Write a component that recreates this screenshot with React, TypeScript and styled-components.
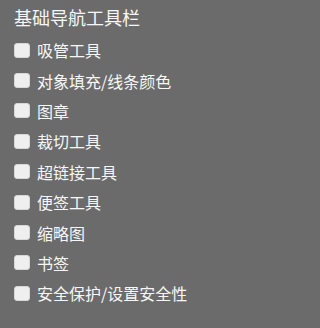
import { useState } from 'react';
import styled, { createGlobalStyle } from 'styled-components';

const GlobalStyle = createGlobalStyle`
  html, body {
    margin: 0;
    padding: 0;
    background: #6b6b6b;
  }
  body {
    font-family: "Noto Sans CJK SC", "Liberation Sans", sans-serif;
  }
`;

const tools = [
  '吸管工具',
  '对象填充/线条颜色',
  '图章',
  '裁切工具',
  '超链接工具',
  '便签工具',
  '缩略图',
  '书签',
  '安全保护/设置安全性',
];

export default function App() {
  const [checked, setChecked] = useState<Record<string, boolean>>({});
  const toggle = (name: string) => () => {
    setChecked(prev => ({ ...prev, [name]: !prev[name] }));
  };
  return (
    <Panel>
      <GlobalStyle />
      <Title>基础导航工具栏</Title>
      <List>
        {tools.map(name => (
          <Row key={name}>
            <Box type="checkbox" checked={!!checked[name]} onChange={toggle(name)} />
            <Label>{name}</Label>
          </Row>
        ))}
      </List>
    </Panel>
  );
}

const Panel = styled.section`
  box-sizing: border-box;
  width: 240px;
  height: 328px;
  padding: 4px 0 0 14px;
  background: #6b6b6b;
  color: #f7f7f7;
`;

const Title = styled.h2`
  margin: 0;
  font-size: 18px;
  font-weight: 400;
  line-height: 26px;
`;

const List = styled.ul`
  list-style: none;
  margin: 0;
  padding: 5px 0 0 0;
`;

const Row = styled.li`
  display: flex;
  align-items: center;
  height: 30.4px;
  gap: 7px;
  font-size: 16px;
`;

const Box = styled.input`
  appearance: none;
  margin: 0;
  width: 16px;
  height: 15px;
  border-radius: 3px;
  background: #efefef;
  border: 1px solid #d8d8d8;
  box-sizing: border-box;
  flex: none;
`;

const Label = styled.span`
  line-height: 20px;
`;
